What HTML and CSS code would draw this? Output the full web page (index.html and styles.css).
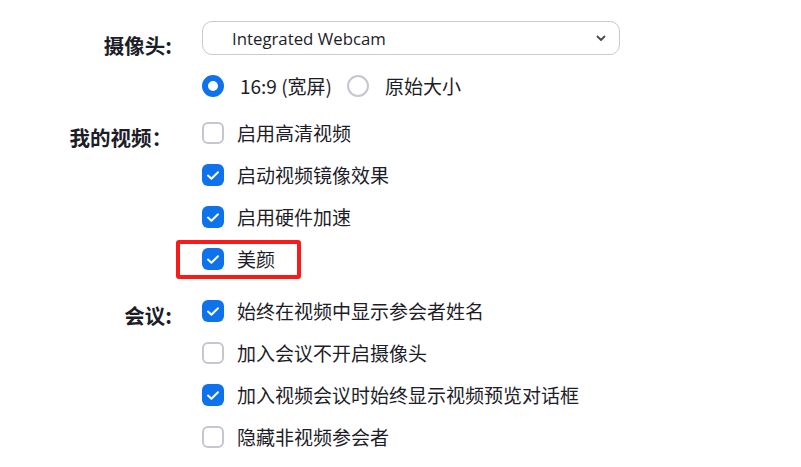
FILE: index.html
```html
<!DOCTYPE html>
<html lang="zh-CN">
<head>
<meta charset="utf-8">
<title>视频设置</title>
<link rel="stylesheet" href="styles.css">
</head>
<body>
<div class="settings">
  <div class="section section-camera">
    <div class="label label-camera">摄像头:</div>
    <div class="controls">
      <div class="select">
        <span class="select-text">Integrated Webcam</span>
        <svg class="chevron" width="10" height="7" viewBox="0 0 10 7"><path d="M1.5 1.5 L5 5 L8.5 1.5" fill="none" stroke="#4a4a55" stroke-width="1.8" stroke-linecap="round" stroke-linejoin="round"/></svg>
      </div>
      <div class="radio-row">
        <div class="radio-item"><span class="radio radio-on"></span><span class="opt">16:9 (宽屏)</span></div>
        <div class="radio-item"><span class="radio"></span><span class="opt">原始大小</span></div>
      </div>
    </div>
  </div>

  <div class="section section-video">
    <div class="label">我的视频：</div>
    <div class="controls">
      <div class="row"><span class="box"></span><span class="opt">启用高清视频</span></div>
      <div class="row"><span class="box box-on"><svg width="14" height="11" viewBox="0 0 14 11"><path d="M2 5.6 L5.4 8.8 L12 2.2" fill="none" stroke="#fff" stroke-width="2" stroke-linecap="round" stroke-linejoin="round"/></svg></span><span class="opt">启动视频镜像效果</span></div>
      <div class="row"><span class="box box-on"><svg width="14" height="11" viewBox="0 0 14 11"><path d="M2 5.6 L5.4 8.8 L12 2.2" fill="none" stroke="#fff" stroke-width="2" stroke-linecap="round" stroke-linejoin="round"/></svg></span><span class="opt">启用硬件加速</span></div>
      <div class="row row-marked"><span class="box box-on"><svg width="14" height="11" viewBox="0 0 14 11"><path d="M2 5.6 L5.4 8.8 L12 2.2" fill="none" stroke="#fff" stroke-width="2" stroke-linecap="round" stroke-linejoin="round"/></svg></span><span class="opt">美颜</span><span class="highlight"></span></div>
    </div>
  </div>

  <div class="section section-meeting">
    <div class="label">会议:</div>
    <div class="controls">
      <div class="row"><span class="box box-on"><svg width="14" height="11" viewBox="0 0 14 11"><path d="M2 5.6 L5.4 8.8 L12 2.2" fill="none" stroke="#fff" stroke-width="2" stroke-linecap="round" stroke-linejoin="round"/></svg></span><span class="opt">始终在视频中显示参会者姓名</span></div>
      <div class="row"><span class="box"></span><span class="opt">加入会议不开启摄像头</span></div>
      <div class="row"><span class="box box-on"><svg width="14" height="11" viewBox="0 0 14 11"><path d="M2 5.6 L5.4 8.8 L12 2.2" fill="none" stroke="#fff" stroke-width="2" stroke-linecap="round" stroke-linejoin="round"/></svg></span><span class="opt">加入视频会议时始终显示视频预览对话框</span></div>
      <div class="row"><span class="box"></span><span class="opt">隐藏非视频参会者</span></div>
    </div>
  </div>
</div>
</body>
</html>
```

FILE: styles.css
```css
html, body {
  margin: 0;
  padding: 0;
  background: #ffffff;
}

body {
  font-family: "Noto Sans CJK SC", "Noto Sans", sans-serif;
  color: #1d1d28;
  width: 801px;
  height: 467px;
  overflow: hidden;
}

.settings {
  padding-top: 21px;
}

.section {
  display: grid;
  grid-template-columns: 172px 1fr;
  column-gap: 30px;
}

.section-video {
  margin-top: 5px;
}

.section-meeting {
  margin-top: 10px;
}

.label {
  text-align: right;
  font-size: 20.5px;
  font-weight: 700;
  line-height: 42px;
  padding-top: 4px;
  color: #1d1d28;
}

.label-camera {
  line-height: 34px;
  padding-top: 7px;
}

.controls {
  display: flex;
  flex-direction: column;
}

.select {
  width: 418px;
  height: 34px;
  box-sizing: border-box;
  border: 1.5px solid #c9c8d3;
  border-radius: 10px;
  display: flex;
  align-items: center;
  justify-content: space-between;
  padding: 0 13px 0 29px;
}

.select-text {
  font-family: "Open Sans", "Noto Sans", sans-serif;
  font-size: 16.8px;
  color: #1d1d28;
}

.chevron {
  display: block;
}

.radio-row {
  margin-top: 10px;
  height: 42px;
  display: flex;
  align-items: center;
  gap: 15px;
}

.radio-item {
  display: flex;
  align-items: center;
  gap: 16px;
}

.radio {
  width: 22px;
  height: 22px;
  box-sizing: border-box;
  border-radius: 50%;
  border: 2px solid #c6c5d0;
  background: #fff;
  flex: none;
}

.radio-on {
  border: 6.5px solid #0e72ed;
}

.opt {
  font-size: 19px;
  line-height: 24px;
  color: #1d1d28;
  white-space: nowrap;
}

.row {
  position: relative;
  height: 42px;
  display: flex;
  align-items: center;
  gap: 13px;
}

.box {
  width: 22px;
  height: 22px;
  box-sizing: border-box;
  border-radius: 6px;
  border: 2px solid #c6c5d0;
  background: #fff;
  flex: none;
  display: flex;
  align-items: center;
  justify-content: center;
}

.box-on {
  border: none;
  background: #0e72ed;
}

.box svg {
  display: block;
}

.highlight {
  position: absolute;
  left: -26px;
  top: 2px;
  width: 125px;
  height: 39px;
  box-sizing: border-box;
  border: 4px solid #fb1a1a;
  border-radius: 3px;
  pointer-events: none;
}
```
